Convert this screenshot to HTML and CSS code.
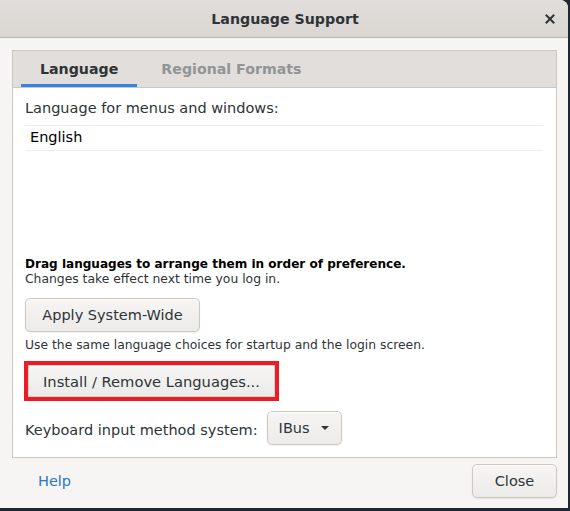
FILE: index.html
```html
<!DOCTYPE html>
<html>
<head>
<meta charset="utf-8">
<link rel="stylesheet" href="styles.css">
</head>
<body>
<div class="window">
  <div class="titlebar">
    <span class="title">Language Support</span>
    <span class="close-x">
      <svg width="10" height="10" viewBox="0 0 10 10"><path d="M1.5 1.5 L8.5 8.5 M8.5 1.5 L1.5 8.5" stroke="#2e3436" stroke-width="2" stroke-linecap="square"/></svg>
    </span>
  </div>
  <div class="body">
    <div class="notebook">
      <div class="tabs">
        <div class="tab active">Language</div>
        <div class="tab">Regional Formats</div>
      </div>
      <div class="page">
        <div class="label">Language for menus and windows:</div>
        <div class="list">
          <div class="row">English</div>
        </div>
        <div class="spacer"></div>
        <div class="hint-bold">Drag languages to arrange them in order of preference.</div>
        <div class="hint">Changes take effect next time you log in.</div>
        <button class="btn apply">Apply System-Wide</button>
        <div class="hint use">Use the same language choices for startup and the login screen.</div>
        <div class="highlight"><button class="btn install">Install / Remove Languages...</button></div>
        <div class="kbd-row">
          <span class="label kbd-label">Keyboard input method system:</span>
          <button class="btn combo">IBus <svg width="10" height="6" viewBox="0 0 10 6"><path d="M1 1 L9 1 L5 5 Z" fill="#2e3436"/></svg></button>
        </div>
      </div>
    </div>
    <div class="footer">
      <a class="help">Help</a>
      <button class="btn close">Close</button>
    </div>
  </div>
</div>
</body>
</html>
```
FILE: styles.css
```css
html, body {
  margin: 0;
  padding: 0;
}
body {
  background: #1e2834;
  width: 570px;
  height: 511px;
  overflow: hidden;
  font-family: "DejaVu Sans", sans-serif;
  color: #2e3436;
}
.window {
  width: 568px;
  height: 508px;
  background: #f6f5f4;
  border-top-right-radius: 8px;
  display: flex;
  flex-direction: column;
  overflow: hidden;
}
.titlebar {
  height: 37px;
  flex: none;
  background: linear-gradient(#e1dedb, #dad6d2);
  border-bottom: 1px solid #bfb8b1;
  display: flex;
  align-items: center;
  justify-content: center;
  position: relative;
}
.title {
  font-weight: bold;
  font-size: 14.2px;
  color: #2e3436;
  margin-left: 2px;
}
.close-x {
  position: absolute;
  left: 545px;
  top: 14px;
  width: 10px;
  height: 10px;
  display: flex;
}
.body {
  flex: 1;
  display: flex;
  flex-direction: column;
  padding: 12px 11px 0 12px;
}
.notebook {
  height: 406px;
  border: 1px solid #cdc7c2;
  background: #ffffff;
  display: flex;
  flex-direction: column;
}
.tabs {
  height: 36px;
  flex: none;
  background: #e1dedb;
  border-bottom: 1px solid #cdc7c2;
  display: flex;
  padding-left: 8px;
}
.tab {
  padding: 0 19px;
  display: flex;
  align-items: center;
  font-weight: bold;
  font-size: 14.2px;
  color: #929595;
  box-sizing: border-box;
  border-bottom: 3px solid transparent;
  padding-top: 3px;
}
.tab.active {
  color: #2e3436;
  border-bottom-color: #3584e4;
  padding-right: 19px;
}
.tab + .tab {
  padding-left: 24px;
}
.page {
  flex: 1;
  display: flex;
  flex-direction: column;
  align-items: flex-start;
  padding: 10px 13px 12px 12px;
}
.label {
  font-size: 14.5px;
  line-height: 20px;
  color: #2e3436;
}
.kbd-label {
  padding-top: 3px;
}
.list {
  align-self: stretch;
  margin-top: 7px;
  border-top: 1px solid #efedec;
  border-bottom: 1px solid #efedec;
}
.row {
  height: 24px;
  line-height: 23px;
  padding-left: 5px;
  font-size: 14.5px;
  color: #000;
}
.spacer {
  flex: 1;
}
.hint-bold {
  font-size: 12.05px;
  font-weight: bold;
  line-height: 15px;
  color: #000;
}
.hint {
  font-size: 12.35px;
  line-height: 15px;
  color: #2e3436;
}
.btn {
  font-family: "DejaVu Sans", sans-serif;
  font-size: 14.5px;
  color: #2e3436;
  background: linear-gradient(#f6f5f4, #edebe9);
  border: 1px solid #cdc7c2;
  border-radius: 5px;
  box-shadow: inset 0 1px #ffffff, 0 1px 2px rgba(0,0,0,0.07);
  padding: 0;
  height: 34px;
  box-sizing: border-box;
  display: flex;
  align-items: center;
  justify-content: center;
}
.apply {
  margin-top: 11px;
  width: 175px;
}
.use {
  margin-top: 6px;
}
.highlight {
  margin-top: 8px;
  margin-left: -1px;
  border: 4px solid #ed1c24;
  padding: 0;
  width: 247px;
  height: 32px;
  overflow: hidden;
  display: flex;
}
.install {
  width: 247px;
  height: 32px;
  border-color: #d8d3ce;
  border-radius: 0;
  font-size: 14.7px;
}
.kbd-row {
  margin-top: 10px;
  display: flex;
  align-items: center;
  gap: 9px;
}
.combo {
  width: 75px;
  gap: 10px;
}
.footer {
  flex: 1;
  display: flex;
  align-items: flex-start;
  justify-content: space-between;
  padding-top: 6px;
}
.help {
  font-size: 14.5px;
  color: #2a76c6;
  margin-left: 26px;
  line-height: 34px;
}
.close {
  width: 85px;
}
```
